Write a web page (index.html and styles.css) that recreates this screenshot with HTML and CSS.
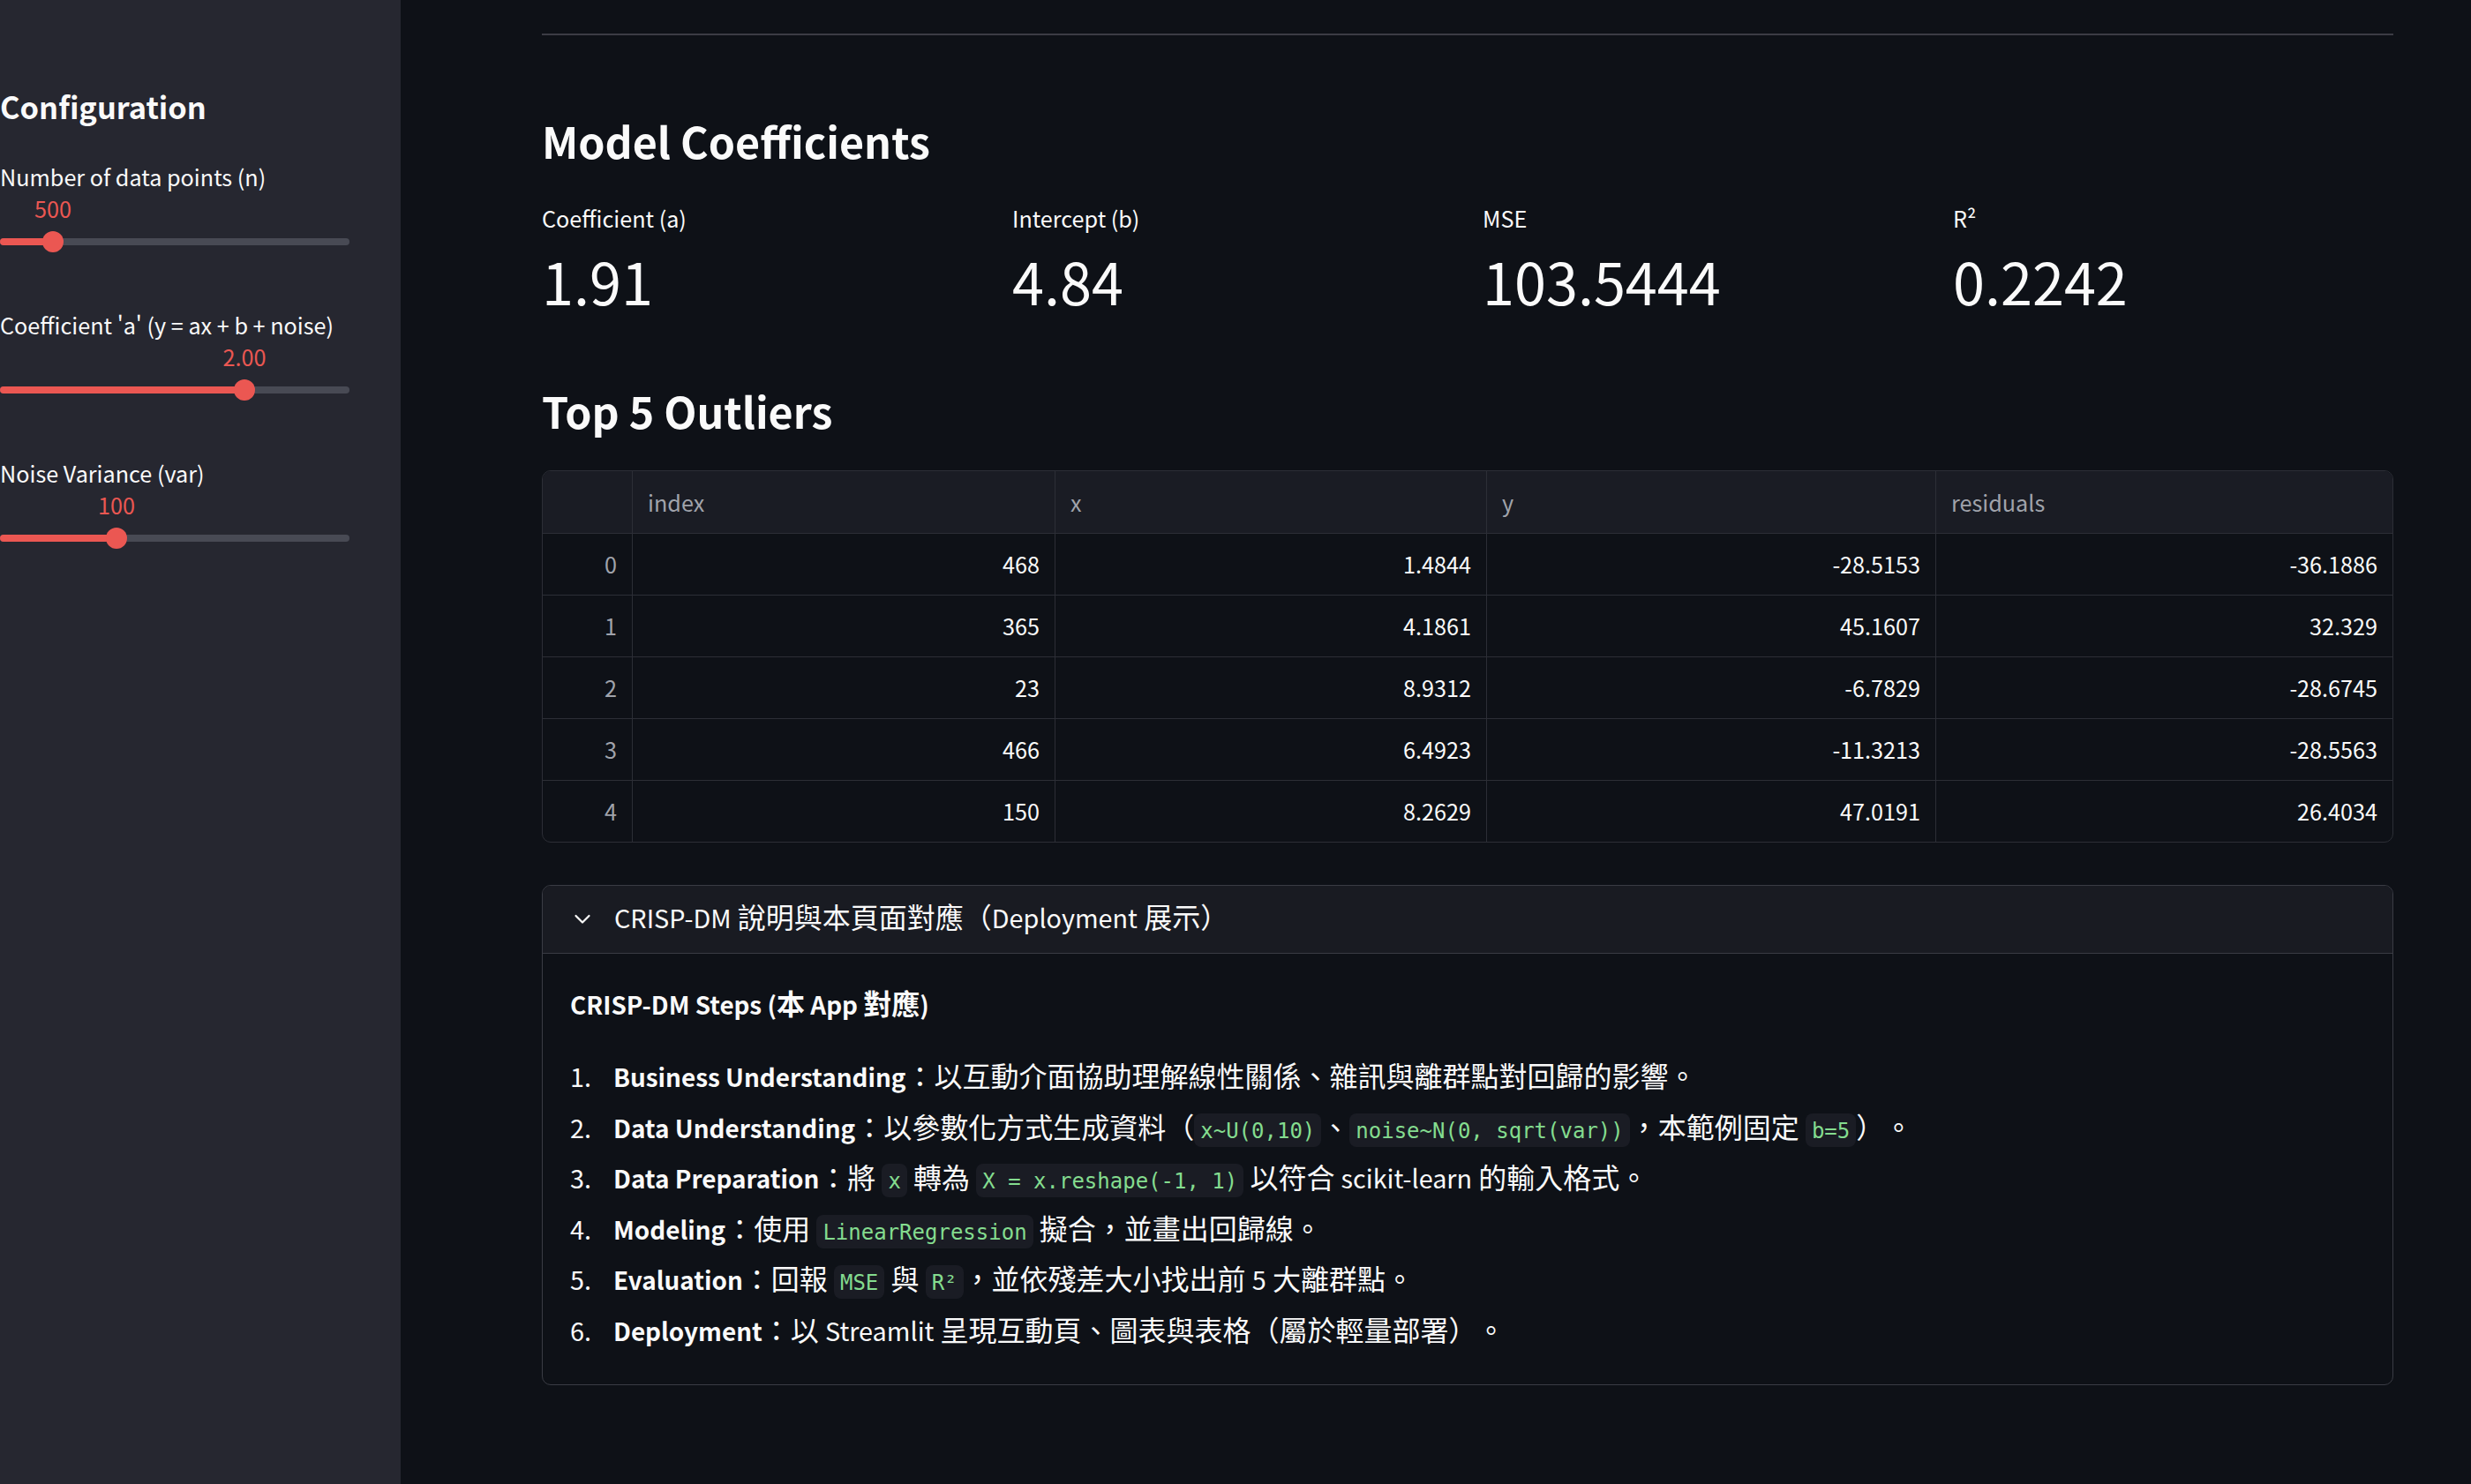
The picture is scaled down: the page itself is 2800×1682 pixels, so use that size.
FILE: index.html
```html
<!DOCTYPE html>
<html lang="zh-Hant">
<head>
<meta charset="utf-8">
<title>Linear Regression · CRISP-DM</title>
<link rel="stylesheet" href="styles.css">
</head>
<body>
<div class="app">
  <aside class="sidebar">
    <div class="side-inner">
      <h2 class="side-title">Configuration</h2>

      <div class="slider" style="--pos: 15.15%">
        <div class="slider-label">Number of data points (n)</div>
        <div class="slider-value-row"><span class="slider-value">500</span></div>
        <div class="slider-rail">
          <div class="slider-bar"><div class="slider-fill"></div></div>
          <div class="slider-thumb"></div>
        </div>
      </div>

      <div class="slider" style="--pos: 69.95%">
        <div class="slider-label">Coefficient 'a' (y = ax + b + noise)</div>
        <div class="slider-value-row"><span class="slider-value">2.00</span></div>
        <div class="slider-rail">
          <div class="slider-bar"><div class="slider-fill"></div></div>
          <div class="slider-thumb"></div>
        </div>
      </div>

      <div class="slider" style="--pos: 33.33%">
        <div class="slider-label">Noise Variance (var)</div>
        <div class="slider-value-row"><span class="slider-value">100</span></div>
        <div class="slider-rail">
          <div class="slider-bar"><div class="slider-fill"></div></div>
          <div class="slider-thumb"></div>
        </div>
      </div>
    </div>
  </aside>

  <main class="main">
    <div class="main-inner">
      <hr class="divider">

      <h3 class="subheader">Model Coefficients</h3>
      <div class="metrics">
        <div class="metric"><div class="metric-label">Coefficient (a)</div><div class="metric-value">1.91</div></div>
        <div class="metric"><div class="metric-label">Intercept (b)</div><div class="metric-value">4.84</div></div>
        <div class="metric"><div class="metric-label">MSE</div><div class="metric-value">103.5444</div></div>
        <div class="metric"><div class="metric-label">R²</div><div class="metric-value">0.2242</div></div>
      </div>

      <h3 class="subheader outliers">Top 5 Outliers</h3>
      <div class="table-wrap">
        <table class="grid">
          <colgroup>
            <col class="c-idx"><col class="c-index"><col class="c-x"><col class="c-y"><col class="c-res">
          </colgroup>
          <thead>
            <tr><th></th><th>index</th><th>x</th><th>y</th><th>residuals</th></tr>
          </thead>
          <tbody>
            <tr><th>0</th><td>468</td><td>1.4844</td><td>-28.5153</td><td>-36.1886</td></tr>
            <tr><th>1</th><td>365</td><td>4.1861</td><td>45.1607</td><td>32.329</td></tr>
            <tr><th>2</th><td>23</td><td>8.9312</td><td>-6.7829</td><td>-28.6745</td></tr>
            <tr><th>3</th><td>466</td><td>6.4923</td><td>-11.3213</td><td>-28.5563</td></tr>
            <tr><th>4</th><td>150</td><td>8.2629</td><td>47.0191</td><td>26.4034</td></tr>
          </tbody>
        </table>
      </div>

      <details class="expander" open>
        <summary class="expander-head">
          <svg class="chevron" width="20" height="12" viewBox="0 0 20 12" aria-hidden="true"><polyline points="2.5,2 10,9.5 17.5,2" fill="none" stroke="#fafafa" stroke-width="2.2" stroke-linecap="round" stroke-linejoin="round"/></svg>
          <span class="expander-title"><span class="lat">CRISP-DM</span> 說明與本頁面對應（<span class="lat">Deployment</span> 展示）</span>
        </summary>
        <div class="expander-body">
          <p class="steps-title"><strong><span class="lat">CRISP-DM Steps (</span>本<span class="lat"> App </span>對應<span class="lat">)</span></strong></p>
          <ol class="steps">
            <li><strong>Business Understanding</strong>：以互動介面協助理解線性關係、雜訊與離群點對回歸的影響。</li>
            <li><strong>Data Understanding</strong>：以參數化方式生成資料（<code>x~U(0,10)</code>、<code>noise~N(0, sqrt(var))</code>，本範例固定 <code>b=5</code>）。</li>
            <li><strong>Data Preparation</strong>：將 <code>x</code> 轉為 <code>X = x.reshape(-1, 1)</code> 以符合 <span class="lat">scikit-learn</span> 的輸入格式。</li>
            <li><strong>Modeling</strong>：使用 <code>LinearRegression</code> 擬合，並畫出回歸線。</li>
            <li><strong>Evaluation</strong>：回報 <code>MSE</code> 與 <code>R²</code>，並依殘差大小找出前 <span class="lat">5</span> 大離群點。</li>
            <li><strong>Deployment</strong>：以 <span class="lat">Streamlit</span> 呈現互動頁、圖表與表格（屬於輕量部署）。</li>
          </ol>
        </div>
      </details>
    </div>
  </main>
</div>
</body>
</html>
```

FILE: styles.css
```css
* { box-sizing: border-box; }

html, body {
  margin: 0;
  padding: 0;
}

body {
  background: #0e1117;
  color: #fafafa;
  font-family: "Noto Sans CJK TC", "Noto Sans", sans-serif;
  text-spacing-trim: space-all;
  overflow: hidden;
}

.app {
  display: flex;
  min-height: 100vh;
}

/* ---------- Sidebar ---------- */
.sidebar {
  flex: none;
  width: 454px;
  background: #262730;
  padding-top: 98px;
}

.side-inner { width: 396px; }

.side-title {
  margin: 0 0 43px;
  font-size: 34.4px;
  line-height: 44px;
  font-weight: 700;
}

.slider { margin-bottom: 67px; }

.slider-label {
  font-size: 25.2px;
  line-height: 30px;
}

.slider-value-row {
  margin-top: 6px;
  height: 30px;
}

.slider-value {
  display: inline-block;
  margin-left: var(--pos);
  transform: translateX(-50%);
  font-size: 25.2px;
  line-height: 30px;
  color: #eb5752;
}

.slider-rail {
  position: relative;
  margin-top: 11px;
  height: 24px;
  display: flex;
  align-items: center;
}

.slider-bar {
  width: 100%;
  height: 8px;
  border-radius: 4px;
  background: #484a54;
  overflow: hidden;
}

.slider-fill {
  width: var(--pos);
  height: 100%;
  background: #eb5752;
}

.slider-thumb {
  position: absolute;
  top: 0;
  left: var(--pos);
  width: 24px;
  height: 24px;
  margin-left: -12px;
  border-radius: 50%;
  background: #eb5752;
}

/* ---------- Main ---------- */
.main {
  flex: 1;
  padding: 38px 0 0 160px;
}

.main-inner { width: 2098px; }

.divider {
  margin: 0;
  border: 0;
  height: 2px;
  background: #3b3c44;
}

.subheader {
  margin: 89px 0 0;
  font-size: 48.4px;
  line-height: 60px;
  font-weight: 700;
}

.subheader.outliers { margin-top: 79px; }

.metrics {
  display: grid;
  grid-template-columns: repeat(4, 499px);
  column-gap: 34px;
  margin-top: 43px;
}

.metric-label {
  font-size: 25.2px;
  line-height: 30px;
}

.metric-value {
  margin-top: 18px;
  font-size: 64.8px;
  line-height: 76px;
  font-weight: 400;
}

/* ---------- Table ---------- */
.table-wrap {
  margin-top: 38px;
  border: 1px solid #2c2e36;
  border-radius: 10px;
  overflow: hidden;
}

.grid {
  width: 100%;
  table-layout: fixed;
  border-collapse: separate;
  border-spacing: 0;
  font-size: 25.2px;
}

.c-idx { width: 102px; }
.c-index { width: 479px; }
.c-x { width: 489px; }
.c-y { width: 509px; }
.c-res { width: 517px; }

.grid th,
.grid td {
  padding: 0 17px;
  font-weight: 400;
  border-right: 1px solid #2c2e36;
  border-bottom: 1px solid #2c2e36;
  white-space: nowrap;
}

.grid th:last-child,
.grid td:last-child { border-right: 0; }

.grid tbody tr:last-child th,
.grid tbody tr:last-child td { border-bottom: 0; }

.grid thead th {
  line-height: 70px;
  background: #1a1c24;
  color: #a0a3ab;
  text-align: left;
}

.grid tbody th,
.grid tbody td {
  line-height: 69px;
  text-align: right;
}

.grid tbody th { color: #a0a3ab; }
.grid tbody td { color: #fafafa; }

/* ---------- Expander ---------- */
.expander {
  margin-top: 48px;
  border: 1px solid #3a3c44;
  border-radius: 10px;
  overflow: hidden;
}

.expander-head {
  display: flex;
  align-items: center;
  gap: 26px;
  height: 77px;
  padding-left: 35px;
  background: #191b22;
  border-bottom: 1px solid #3a3c44;
  list-style: none;
  cursor: pointer;
  font-size: 32px;
}

.expander-head::-webkit-details-marker { display: none; }

.chevron { flex: none; display: block; }

.expander-title {
  line-height: 40px;
  padding-bottom: 6px;
}

.lat { font-size: 0.9em; }

.expander-body {
  padding: 35px 31px 33px;
  font-size: 32px;
}

.steps-title {
  margin: 0;
  line-height: 40px;
}

.steps-title strong { font-weight: 700; }
.steps-title .lat { font-size: 0.87em; }

.steps {
  margin: 32px 0 0;
  padding: 0;
  list-style: none;
  counter-reset: step;
}

.steps li {
  counter-increment: step;
  line-height: 57.6px;
}

.steps li * { line-height: 1; }

.steps li::before {
  content: counter(step) ".";
  display: inline-block;
  width: 49px;
  font-size: 28.8px;
  line-height: 1;
}

.steps strong {
  font-size: 0.872em;
  font-weight: 700;
}

code {
  font-family: "DejaVu Sans Mono", "Liberation Mono", monospace;
  font-size: 24px;
  color: #84dc8f;
  background: #1a1c24;
  padding: 6px 7px 4px;
  border-radius: 8px;
}
```
